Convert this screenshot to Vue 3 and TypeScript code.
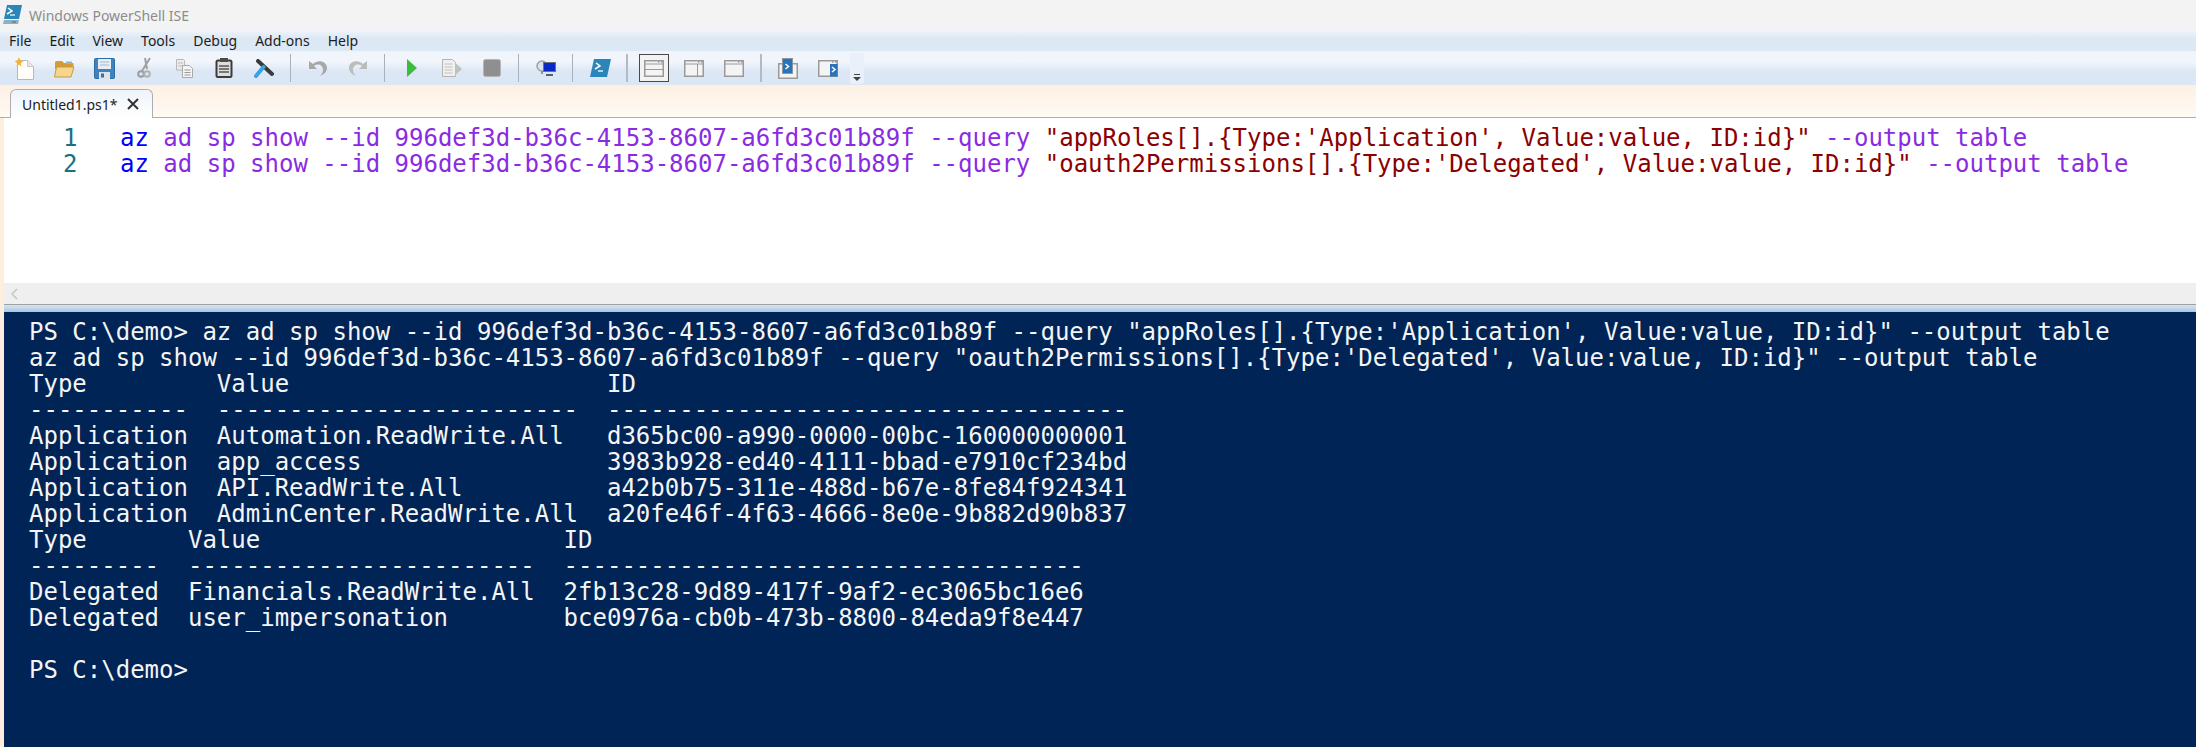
<script setup lang="ts">
const menus = ['File', 'Edit', 'View', 'Tools', 'Debug', 'Add-ons', 'Help']
const q1 = `"appRoles[].{Type:'Application', Value:value, ID:id}"`
const q2 = `"oauth2Permissions[].{Type:'Delegated', Value:value, ID:id}"`
const base = 'ad sp show --id 996def3d-b36c-4153-8607-a6fd3c01b89f --query'
const editor = [
  { n: 1, q: q1 },
  { n: 2, q: q2 },
]
const consoleText = [
  `PS C:\\demo> az ${base} ${q1} --output table`,
  `az ${base} ${q2} --output table`,
  `Type         Value                      ID`,
  `-----------  -------------------------  ------------------------------------`,
  `Application  Automation.ReadWrite.All   d365bc00-a990-0000-00bc-160000000001`,
  `Application  app_access                 3983b928-ed40-4111-bbad-e7910cf234bd`,
  `Application  API.ReadWrite.All          a42b0b75-311e-488d-b67e-8fe84f924341`,
  `Application  AdminCenter.ReadWrite.All  a20fe46f-4f63-4666-8e0e-9b882d90b837`,
  `Type       Value                     ID`,
  `---------  ------------------------  ------------------------------------`,
  `Delegated  Financials.ReadWrite.All  2fb13c28-9d89-417f-9af2-ec3065bc16e6`,
  `Delegated  user_impersonation        bce0976a-cb0b-473b-8800-84eda9f8e447`,
  ``,
  `PS C:\\demo>`,
].join('\n')
</script>

<template>
  <div class="app">
    <header class="title">
      <svg class="logo" width="21" height="20" viewBox="0 0 21 20">
        <path d="M5 0h15l-3 14H2z" fill="#2a86b8" />
        <path d="M6 3l4 3-5 3" fill="none" stroke="#fff" stroke-width="1.5" />
        <path d="M8 10h5" stroke="#fff" stroke-width="1.2" />
        <path d="M2 15h15l-1 4H1z" fill="#8fb0bf" />
        <path d="M10 17h4" stroke="#4c6a78" />
      </svg>
      <span>Windows PowerShell ISE</span>
    </header>

    <nav class="menu">
      <span v-for="m in menus" :key="m">{{ m }}</span>
    </nav>

    <div class="toolbar">
      <span class="tool"><svg width="22" height="23" viewBox="0 0 22 23"><path d="M4.5 3.5h10l6 6v13h-16z" fill="#fffef8" stroke="#b8b8b8" /><path d="M14.500 3.500v6h6" fill="#e8e8e8" stroke="#c8c8c8" /><path d="M6 0l1.300 3.200L10.500 4 7.800 6l.6 3.500L6 7.500 3.600 9.500 4.200 6 1.500 4l3.200-.8z" fill="#fdb02c" /></svg></span>
      <span class="tool"><svg width="22" height="19" viewBox="0 0 22 19"><path d="M2 3.500a1.500 1.500 0 0 1 1.500-1.500H9l2 2h8.500a1 1 0 0 1 1 1V10H2z" fill="#d49c36" /><path d="M13 2.500h6v2.500h-6z" fill="#8fb7cf" /><path d="M3.500 8h17.500l-3 10H1.500z" fill="#f6d68a" stroke="#c99b42" /></svg></span>
      <span class="tool"><svg width="21" height="21" viewBox="0 0 21 21"><rect x=".5" y=".5" width="20" height="20" rx="1" fill="#3f82bd" stroke="#2c6ca5" /><rect x="4" y="1" width="13" height="10" fill="#e6edf4" /><path d="M6 4h9M6 7h9" stroke="#aab9c7" /><rect x="5" y="14" width="11" height="7" fill="#dce3ea" /><rect x="7" y="15.500" width="3" height="4" fill="#3f6f9b" /></svg></span>
      <span class="tool"><svg width="16" height="22" viewBox="0 0 16 22"><path d="M14 1L6 14M9 1l2 11" stroke="#a0a0a0" stroke-width="2" fill="none" /><circle cx="5" cy="17" r="2.800" fill="none" stroke="#9c9c9c" stroke-width="2" /><circle cx="11" cy="17" r="2.800" fill="none" stroke="#b0b0b0" stroke-width="2" /></svg></span>
      <span class="tool"><svg width="17" height="19" viewBox="0 0 17 19"><path d="M.5.5h7l1 1V11H.5z" fill="#ececec" stroke="#b8b8b8" /><path d="M2 4h5M2 7h5" stroke="#bbb" /><path d="M6.500 6.500h7l3 3v9h-10z" fill="#f4f4f4" stroke="#a8a8a8" /><path d="M8.500 11h6M8.500 13.500h6M8.500 16h6" stroke="#999" /></svg></span>
      <span class="tool"><svg width="18" height="20" viewBox="0 0 18 20"><rect x="1.500" y="2.500" width="15" height="16.500" rx="1.500" fill="#dedede" stroke="#3c3c3c" stroke-width="2" /><rect x="5" y="0" width="8" height="4" fill="#4c4c4c" /><path d="M4 8h10M4 11h10M4 14h10" stroke="#555" stroke-width="1.300" /></svg></span>
      <span class="tool"><svg width="20" height="19" viewBox="0 0 20 19"><path d="M4 2l14 13" stroke="#3b3b3b" stroke-width="4" stroke-linecap="round" /><path d="M2 17L9.500 8" stroke="#35a4e0" stroke-width="4" stroke-linecap="round" /></svg></span>
      <i class="sep" />
      <span class="tool"><svg width="20" height="18" viewBox="0 0 20 18"><path d="M1 2v8h8L6 7c4-3 9-1 9 4 0 2-1 4-3 6 5-2 7-5 7-8 0-7-9-9-14-4z" fill="#a8a8a8" /></svg></span>
      <span class="tool"><svg width="20" height="18" viewBox="0 0 20 18"><path d="M19 2v8h-8l3-3c-4-3-9-1-9 4 0 2 1 4 3 6-5-2-7-5-7-8 0-7 9-9 14-4z" fill="#bcbcbc" /></svg></span>
      <i class="sep" />
      <span class="tool"><svg width="12" height="20" viewBox="0 0 12 20"><path d="M1 1l10 9-10 9z" fill="#3dbb3d" /></svg></span>
      <span class="tool"><svg width="22" height="20" viewBox="0 0 22 20"><path d="M1.500 1.500h10l3 3v14h-13z" fill="#f0f0f0" stroke="#b4b4b4" /><path d="M3.500 6h8M3.500 9h8M3.500 12h8M3.500 15h8" stroke="#c2c2c2" /><path d="M14 4.500l7 6.500-7 6.500z" fill="#c0c0c0" /></svg></span>
      <span class="tool"><svg width="18" height="18" viewBox="0 0 18 18"><rect x=".5" y=".5" width="17" height="17" rx="2" fill="#8f8f8f" stroke="#b4b4b4" /></svg></span>
      <i class="sep" />
      <span class="tool"><svg width="20" height="18" viewBox="0 0 20 18"><circle cx="6" cy="7" r="5" fill="#dce3e8" stroke="#95a3ab" stroke-width="1.500" /><rect x="7.500" y="3.500" width="12" height="9" fill="#0a28c8" stroke="#6b7680" /><path d="M6 12v3" stroke="#8a959c" stroke-width="2" /><path d="M10 16h7" stroke="#555f66" stroke-width="2" /></svg></span>
      <i class="sep" />
      <span class="tool"><svg width="21" height="18" viewBox="0 0 21 18"><path d="M4 0h17l-4 18H0z" fill="#2a86b8" /><path d="M6 4l4 3-5 3" fill="none" stroke="#fff" stroke-width="1.500" /><path d="M8 12h5" stroke="#fff" stroke-width="1.300" /></svg></span>
      <i class="sep wide" />
      <span class="tool"><span class="selected"><svg width="20" height="17" viewBox="0 0 20 17"><rect x=".75" y=".75" width="18.500" height="15.500" fill="#f4f4f4" stroke="#9a9a9a" stroke-width="1.500" /><path d="M1 4h18M1 9.500h18" stroke="#9a9a9a" /><path d="M14 2h1.500M17 2h1.500" stroke="#777" /></svg></span></span>
      <span class="tool"><svg width="20" height="17" viewBox="0 0 20 17"><rect x=".75" y=".75" width="18.500" height="15.500" fill="#f4f4f4" stroke="#9a9a9a" stroke-width="1.500" /><path d="M1 4h18M13.500 4v12" stroke="#9a9a9a" /><path d="M14 2h1.500M17 2h1.500" stroke="#777" /></svg></span>
      <span class="tool"><svg width="20" height="17" viewBox="0 0 20 17"><rect x=".75" y=".75" width="18.500" height="15.500" fill="#f4f4f4" stroke="#9a9a9a" stroke-width="1.500" /><path d="M1 4h18" stroke="#9a9a9a" /><path d="M14 2h1.500M17 2h1.500" stroke="#777" /></svg></span>
      <i class="sep wide" />
      <span class="tool"><svg width="20" height="21" viewBox="0 0 20 21"><rect x=".75" y="5.750" width="18.500" height="14.500" fill="#f4f4f4" stroke="#9a9a9a" stroke-width="1.500" /><rect x="4.500" y=".5" width="10" height="15" fill="#2a73b8" stroke="#8a96a0" /><path d="M7.500 6l3 2.500-3 2.500" fill="none" stroke="#fff" stroke-width="1.500" /></svg></span>
      <span class="tool"><svg width="20" height="17" viewBox="0 0 20 17"><rect x=".75" y=".75" width="18.500" height="15.500" fill="#f4f4f4" stroke="#9a9a9a" stroke-width="1.500" /><rect x="12" y="4" width="7.500" height="12.500" fill="#2a73b8" /><path d="M14 7l3 2.500-3 2.500" fill="none" stroke="#fff" stroke-width="1.500" /><path d="M14 2h1.500M17 2h1.500" stroke="#777" /></svg></span>
      <span class="more"><i class="dash" /><i class="arrow" /></span>
    </div>

    <div class="workspace">
      <div class="tabs">
        <div class="tab">
          <span>Untitled1.ps1*</span>
          <svg width="12" height="12" viewBox="0 0 12 12"><path d="M1 1l10 10M11 1L1 11" stroke="#333" stroke-width="2" /></svg>
        </div>
      </div>
      <section class="editor">
        <div v-for="l in editor" :key="l.n" class="line">
          <span class="num">{{ l.n }}</span>
          <span><span class="cmd">az</span> <span class="arg">{{ base }}</span> <span class="str">{{ l.q }}</span> <span class="arg">--output table</span></span>
        </div>
      </section>
      <div class="hscroll">
        <svg width="8" height="12" viewBox="0 0 8 12"><path d="M6 1L1 6l5 5" fill="none" stroke="#c4c4c4" stroke-width="1.500" /></svg>
      </div>
      <div class="splitter" />
      <pre class="console">{{ consoleText }}</pre>
    </div>
  </div>
</template>

<style scoped>
.app {
  width: 2196px;
  height: 747px;
  display: flex;
  flex-direction: column;
  overflow: hidden;
  background: #fdeedd;
  font-family: "Noto Sans", "Open Sans", sans-serif;
}
.title {
  height: 30px;
  flex: none;
  display: flex;
  align-items: center;
  gap: 6px;
  padding-left: 2px;
  background: #f3f3f3;
  color: #8c8c8c;
  font-size: 14px;
}
.menu {
  height: 21px;
  flex: none;
  display: flex;
  align-items: center;
  gap: 18px;
  padding-left: 9px;
  background: linear-gradient(#f0f5fb, #dde8f5 38%);
  color: #1c1c1c;
  font-size: 14px;
}
.toolbar {
  height: 34px;
  flex: none;
  display: flex;
  align-items: center;
  padding-left: 4px;
  background: linear-gradient(#eff4fb, #f2f6fc 30%, #dce7f5 60%);
}
.tool {
  width: 40px;
  height: 30px;
  flex: none;
  display: flex;
  align-items: center;
  justify-content: center;
}
.selected {
  width: 30px;
  height: 28px;
  display: flex;
  align-items: center;
  justify-content: center;
  box-sizing: border-box;
  background: #f3f3f3;
  border: 1px solid #4a4a4a;
}
.sep {
  width: 1px;
  height: 28px;
  flex: none;
  margin: 0 7px 0 6px;
  background: #aab1ba;
}
.sep.wide {
  width: 2px;
  margin-right: 6px;
  background: #b4bac2;
}
.more {
  width: 14px;
  height: 31px;
  margin-left: 2px;
  display: flex;
  flex-direction: column;
  align-items: center;
  justify-content: flex-end;
  gap: 2px;
  padding-bottom: 3px;
  box-sizing: border-box;
  background: #e9f0f9;
  border-radius: 3px;
}
.dash {
  width: 6px;
  height: 1px;
  background: #444;
}
.arrow {
  width: 0;
  height: 0;
  border: 4px solid transparent;
  border-top: 4px solid #444;
  border-bottom: 0;
}
.workspace {
  flex: 1;
  min-height: 0;
  display: flex;
  flex-direction: column;
  padding-left: 4px;
  background: #fdeedd;
}
.tabs {
  height: 33px;
  flex: none;
  display: flex;
  align-items: flex-end;
  margin-left: -4px;
  padding-left: 10px;
  background: linear-gradient(#fdf0e3, #fffaf4);
  border-bottom: 1px solid #adadad;
  box-sizing: border-box;
}
.tab {
  width: 143px;
  height: 29px;
  margin-bottom: -1px;
  display: flex;
  align-items: center;
  gap: 9px;
  padding-left: 11px;
  box-sizing: border-box;
  background: linear-gradient(#eef4fb, #fff);
  border: 1px solid #adadad;
  border-bottom: 0;
  border-radius: 6px 6px 0 0;
  color: #1c1c1c;
  font-size: 14px;
}
.editor {
  height: 165px;
  flex: none;
  padding-top: 7px;
  box-sizing: border-box;
  background: #fff;
}
.line,
.console {
  font-family: "DejaVu Sans Mono", monospace;
  font-size: 24px;
  line-height: 26px;
  white-space: pre;
}
.line {
  display: flex;
}
.num {
  width: 116px;
  flex: none;
  padding-left: 59px;
  box-sizing: border-box;
  color: #1c6f80;
}
.cmd { color: #0000ff; }
.arg { color: #8a2be2; }
.str { color: #8b0000; }
.hscroll {
  height: 22px;
  flex: none;
  display: flex;
  align-items: center;
  padding-left: 7px;
  background: #efefef;
  border-bottom: 1px solid #a0a0a0;
  box-sizing: border-box;
}
.splitter {
  height: 7px;
  flex: none;
  background: linear-gradient(#d6e4f3, #a9c6e2);
}
.console {
  flex: 1;
  margin: 0;
  padding: 7px 0 0 25px;
  background: #012456;
  color: #f5f5f5;
}
</style>
